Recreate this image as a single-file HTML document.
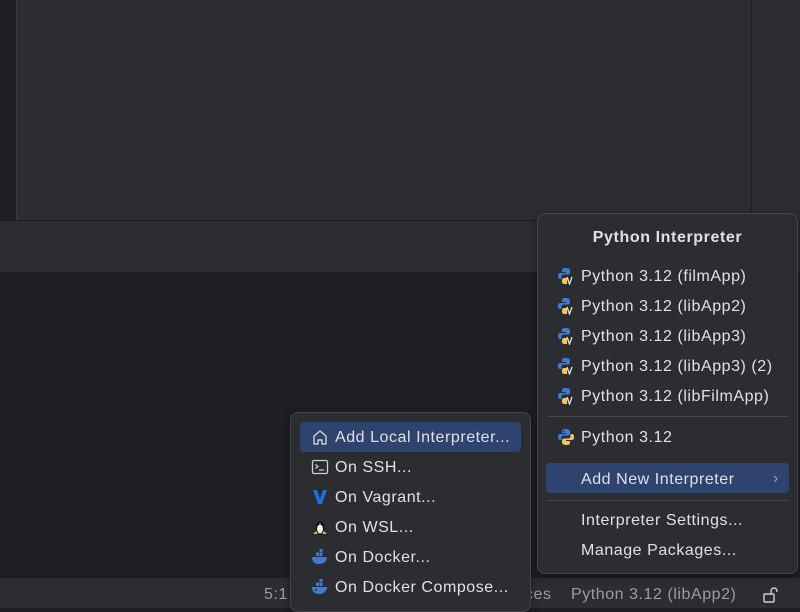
<!DOCTYPE html>
<html><head><meta charset="utf-8"><style>
*{margin:0;padding:0;box-sizing:border-box}
body{width:800px;height:608px;overflow:hidden;background:#1e1f22;font-family:"Liberation Sans",sans-serif;color:#dfe1e5;font-size:16px;letter-spacing:0.55px;position:relative}
.abs{position:absolute}
.it{position:absolute;height:30px;line-height:32px;white-space:nowrap}
.ic{position:absolute;width:18px;height:18px}
</style></head><body>
<div class="abs" style="left:0;top:0;width:16px;height:221px;background:#1e1f22"></div>
<div class="abs" style="left:16px;top:0;width:735px;height:221px;background:#2b2d30;border-left:1px solid #393b40"></div>
<div class="abs" style="left:751px;top:0;width:49px;height:221px;background:#2b2d30;border-left:1px solid #1e1f22"></div>
<div class="abs" style="left:0;top:220px;width:800px;height:1px;background:#1e1f22"></div>
<div class="abs" style="left:0;top:221px;width:800px;height:52px;background:#2b2d30"></div>
<div class="abs" style="left:0;top:272px;width:800px;height:2px;background:#1e1f22"></div>
<div class="abs" style="left:0;top:577px;width:800px;height:31px;background:#2b2d30;border-top:1px solid #1e1f22"></div>
<div class="abs" style="left:264px;top:586px;color:#9a9da3">5:1</div>
<div class="abs" style="left:525px;top:586px;color:#9a9da3">ces</div>
<div class="abs" style="left:571px;top:586px;color:#9a9da3">Python 3.12 (libApp2)</div>
<svg class="abs" style="left:762px;top:586px" width="18" height="18" viewBox="0 0 18 18"><rect x="2" y="8" width="10" height="8" rx="1" fill="none" stroke="#ced0d6" stroke-width="1.4"/><path d="M9 8V5a3 3 0 0 1 6 0v1" fill="none" stroke="#ced0d6" stroke-width="1.4"/></svg>

<div class="abs" style="left:537px;top:213px;width:261px;height:361px;background:#2b2d30;border:1px solid #43454a;border-radius:8px;box-shadow:0 2px 8px rgba(0,0,0,.4)">
<div class="abs" style="left:0;width:259px;top:15px;text-align:center;font-weight:bold;font-size:16px;letter-spacing:0.6px">Python Interpreter</div>
</div>
<div class="abs" style="left:547px;top:416px;width:241px;height:1px;background:#43454a"></div>
<div class="abs" style="left:546px;top:463px;width:243px;height:30px;background:#2e436e;border-radius:4px"></div>
<div class="abs" style="left:547px;top:500px;width:241px;height:1px;background:#43454a"></div>

<div class="abs" style="left:290px;top:412px;width:241px;height:200px;background:#2b2d30;border:1px solid #43454a;border-radius:8px;box-shadow:0 2px 8px rgba(0,0,0,.4)"></div>
<div class="abs" style="left:300px;top:422px;width:221px;height:30px;background:#2e436e;border-radius:4px"></div>
<div id="r"></div>

<script>
var py='<svg viewBox="0 0 18 18" width="18" height="18"><path d="M8.5 1C5 1 5 2.5 5 3.5V5h4v1H3C1.5 6 1 7.5 1 9s.5 3 2 3h1.5v-2c0-1.5 1-2.5 2.5-2.5h4c1 0 2-1 2-2v-2C13 1.7 11 1 8.5 1z" fill="#3d7bd9"/><circle cx="7" cy="3.2" r=".8" fill="#2b2d30"/><path d="M9.5 17c3.5 0 3.5-1.5 3.5-2.5V13H9v-1h6c1.5 0 2-1.5 2-3s-.5-3-2-3h-1.5v2c0 1.5-1 2.5-2.5 2.5H7c-1 0-2 1-2 2v2C5 16.3 7 17 9.5 17z" fill="#f0c75a"/></svg>';
var pyv='<svg viewBox="0 0 18 18" width="18" height="18"><path d="M8.5 1C5 1 5 2.5 5 3.5V5h4v1H3C1.5 6 1 7.5 1 9s.5 3 2 3h1.5v-2c0-1.5 1-2.5 2.5-2.5h4c1 0 2-1 2-2v-2C13 1.7 11 1 8.5 1z" fill="#3d7bd9"/><path d="M5 13c0-1 1-2 2-2h3v6H7c-1 0-2-1-2-2z" fill="#f0c75a"/><path d="M10 10l2.5 7L15 10" fill="none" stroke="#dfe1e5" stroke-width="1.3"/></svg>';
var h='';
['filmApp','libApp2','libApp3','libApp3) (2','libFilmApp'].forEach(function(n,i){var y=261+i*30;
h+='<div class="ic" style="left:557px;top:'+(y+6)+'px">'+pyv+'</div><div class="it" style="left:581px;top:'+y+'px">Python 3.12 ('+n+')</div>';});
h+='<div class="ic" style="left:557px;top:428px">'+py+'</div><div class="it" style="left:581px;top:422px">Python 3.12</div>';
h+='<div class="it" style="left:581px;top:464px">Add New Interpreter</div><div class="it" style="left:773px;top:463px;color:#9a9da3">›</div>';
h+='<div class="it" style="left:581px;top:505px">Interpreter Settings...</div><div class="it" style="left:581px;top:535px">Manage Packages...</div>';
var icons=[
'<svg viewBox="0 0 18 18" width="18" height="18"><path d="M3 16V8l6-5 6 5v8h-4v-4H7v4z" fill="none" stroke="#ced0d6" stroke-width="1.4" stroke-linejoin="round"/></svg>',
'<svg viewBox="0 0 18 18" width="18" height="18"><rect x="1.5" y="2.5" width="15" height="13" rx="1.5" fill="none" stroke="#ced0d6" stroke-width="1.3"/><path d="M4.5 6.5l2.5 2-2.5 2M8 12h5" fill="none" stroke="#ced0d6" stroke-width="1.3"/></svg>',
'<svg viewBox="0 0 18 18" width="18" height="18"><path d="M2 2h4l3 9 3-9h4L11 16H7z" fill="#1f6fe0"/></svg>',
'<svg viewBox="0 0 18 18" width="18" height="18"><ellipse cx="9" cy="10" rx="4.5" ry="6.5" fill="#111"/><ellipse cx="9" cy="11" rx="3" ry="4.5" fill="#eee"/><path d="M2 16l3-3 2 3zM16 16l-3-3-2 3z" fill="#f0b020"/><path d="M8 5h2l-1 1.2z" fill="#f0b020"/></svg>',
'<svg viewBox="0 0 18 18" width="18" height="18"><path d="M1 9h15c0 4-3 7-8 7S1 13 1 9z" fill="#3d7bd9"/><rect x="5" y="4.5" width="3" height="3.5" fill="#3d7bd9"/><rect x="8.5" y="4.5" width="3" height="3.5" fill="#3d7bd9"/><rect x="8.5" y="1" width="3" height="3" fill="#3d7bd9"/></svg>',
'<svg viewBox="0 0 18 18" width="18" height="18"><path d="M1 9h15c0 4-3 7-8 7S1 13 1 9z" fill="#3d7bd9"/><rect x="5" y="4.5" width="3" height="3.5" fill="#3d7bd9"/><rect x="8.5" y="4.5" width="3" height="3.5" fill="#3d7bd9"/><rect x="8.5" y="1" width="3" height="3" fill="#3d7bd9"/><circle cx="5" cy="12" r="1" fill="#2b2d30"/></svg>'];
['Add Local Interpreter...','On SSH...','On Vagrant...','On WSL...','On Docker...','On Docker Compose...'].forEach(function(t,i){var y=422+i*30;
h+='<div class="ic" style="left:311px;top:'+(y+6)+'px">'+icons[i]+'</div><div class="it" style="left:335px;top:'+y+'px">'+t+'</div>';});
document.getElementById('r').outerHTML=h;
</script>
</body></html>
